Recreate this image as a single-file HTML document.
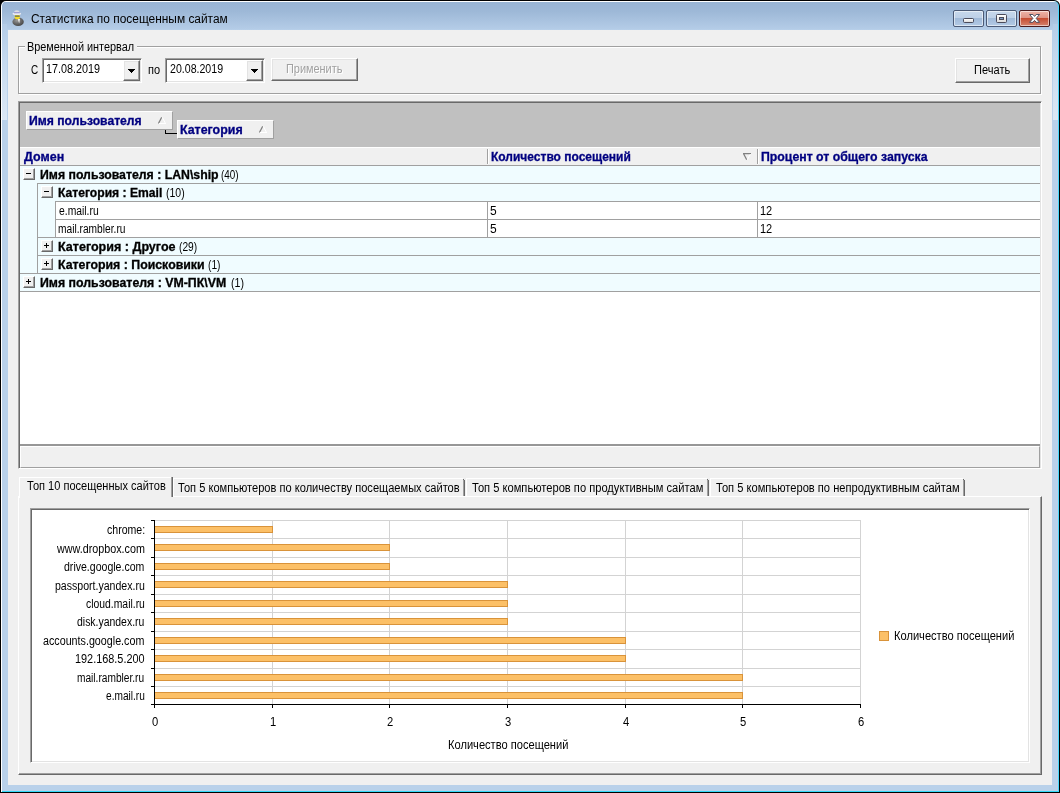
<!DOCTYPE html>
<html lang="ru"><head><meta charset="utf-8"><title>Статистика по посещенным сайтам</title>
<style>
html,body{margin:0;padding:0}
body{width:1060px;height:793px;position:relative;overflow:hidden;background:#fff;
 font-family:"Liberation Sans","DejaVu Sans",sans-serif;font-size:12px;color:#000}
div,span,svg{position:absolute;box-sizing:border-box}
.t{white-space:nowrap;line-height:1;transform-origin:0 0}
.t b{font-weight:bold}.t span{position:static}
#frame{left:0;top:0;width:1060px;height:793px;background:#000;border-radius:6px 6px 0 0}
#frame2{left:1px;top:1px;width:1058px;height:791px;border-radius:5px 5px 0 0;
 background:linear-gradient(#fff,#fff 1px,transparent 1px),linear-gradient(#98b4d4 0,#9db8d7 10px,#b4cce7 28px,#b9d1ea 29px,#b9d1ea 100%);
 box-shadow:inset 1px 0 0 #fff, inset -1px 0 0 #4ad8fc, inset 0 -1px 0 #35d8f8}
#txt{left:0;top:0;width:1060px;height:793px;will-change:transform}
#tlcorner{left:0;top:0;width:7px;height:7px;background:#000}
#sideL,#sideR{top:24px;width:5px;height:96px;background:linear-gradient(#b4cce7,#c6daef 40%,#dce8f5)}
#sideL{left:2px}#sideR{left:1053px}
#client{left:8px;top:30px;width:1044px;height:755px;background:#f0f0f0}
.sunk{border:1px solid;border-color:#a0a0a0 #fff #fff #a0a0a0;box-shadow:inset 1px 1px 0 #696969, inset -1px -1px 0 #e3e3e3}
.btn{background:#f0f0f0;border:1px solid;border-color:#fff #696969 #696969 #fff;box-shadow:inset -1px -1px 0 #a0a0a0, inset 1px 1px 0 #e3e3e3}
.cb{top:10px;height:17px;border:1px solid #4b5a76;border-radius:2px;box-shadow:inset 0 0 0 1px rgba(255,255,255,.55)}
.cbn{background:linear-gradient(#c7d8ec 0,#bdd0e7 7px,#9fb9d8 7px,#b3cae5 100%)}
.cbx{border-color:#4a1a1c;background:linear-gradient(#eeb4a8 0,#df9384 7px,#c4492e 7px,#d6836e 100%)}
.grp{border:1px solid #a0a0a0;box-shadow:1px 1px 0 #fff, inset 1px 1px 0 #fff}
.chip{background:#f0f0f0;border:1px solid;border-color:#fff #a0a0a0 #a0a0a0 #fff}
.row{left:20px;width:1020px;height:18px;background:#f0fcff;border-bottom:1px solid #a0a0a0}
.pm{width:12px;height:12px;background:#f0f0f0;border:1px solid;border-color:#fff #696969 #696969 #fff;box-shadow:inset -1px -1px 0 #a0a0a0}
.pm i{position:absolute;background:#000}
.vl{width:1px;background:#a0a0a0}
.hl{height:1px;background:#a0a0a0}
</style></head>
<body>
<div id="tlcorner"></div><div id="frame"></div><div id="frame2"></div>
<div id="sideL"></div><div id="sideR"></div>
<div id="client"></div>
<svg style="left:10px;top:8px" width="16" height="20" viewBox="0 0 16 20">
<defs><radialGradient id="gb" cx="0.4" cy="0.35" r="0.7"><stop offset="0" stop-color="#9a9a9a"/><stop offset="0.6" stop-color="#636363"/><stop offset="1" stop-color="#444"/></radialGradient></defs>
<ellipse cx="8.1" cy="13.7" rx="5.7" ry="4.3" fill="url(#gb)"/>
<path d="M7.6 10.6 L10 10.9 L9.2 15.6 Z" fill="#f2f2f2"/>
<ellipse cx="7.3" cy="8.9" rx="2.7" ry="2.3" fill="#f6dc2a"/>
<rect x="4.9" y="7.5" width="4.8" height="1.3" rx="0.4" fill="#5d6b5d"/>
<ellipse cx="6.8" cy="5.7" rx="4.3" ry="1.3" fill="#eeeef4"/>
<path d="M3.9 5.6 Q3.9 2.2 6.8 2.2 Q9.8 2.2 9.8 5.6 Z" fill="#dcdce4"/>
<rect x="3.9" y="4.2" width="5.9" height="1" fill="#8f8fd0"/>
</svg>
<div class="cb cbn" style="left:953px;width:31px"></div>
<div class="cb cbn" style="left:986px;width:31px"></div>
<div class="cb cbx" style="left:1019px;width:31px"></div>
<div style="left:963px;top:18px;width:11px;height:5px;background:linear-gradient(#fff,#dcdcdc);border:1px solid #4b4b5a;border-radius:1.5px"></div>
<div style="left:996px;top:14px;width:11px;height:9px;background:linear-gradient(#fff,#dcdcdc);border:1px solid #4b4b5a;border-radius:1.5px"></div>
<div style="left:999px;top:17px;width:5px;height:3px;background:#7b9cc6;border:1px solid #4b4b5a"></div>
<svg style="left:1027px;top:13px" width="15" height="11" viewBox="0 0 15 11">
<path d="M2.6 1.5 L5.9 1.5 L7.55 3.4 L9.2 1.5 L12.5 1.5 L9.2 5.4 L12.5 9.3 L9.2 9.3 L7.55 7.4 L5.9 9.3 L2.6 9.3 L5.9 5.4 Z" fill="#fff" stroke="#3b4359" stroke-width="0.9" stroke-linejoin="round"/>
</svg>
<div class="grp" style="left:18px;top:46px;width:1023px;height:48px"></div>
<div style="left:25px;top:40px;width:112px;height:14px;background:#f0f0f0"></div>
<div class="sunk" style="left:42px;top:58px;width:100px;height:25px;background:#fff"></div>
<div class="btn" style="left:123px;top:60px;width:17px;height:21px"></div>
<svg style="left:128px;top:69px" width="8" height="5" viewBox="0 0 8 5" shape-rendering="crispEdges"><path d="M0 0H7V1H6V2H5V3H4V4H3V3H2V2H1V1H0Z" fill="#000"/></svg>
<div class="sunk" style="left:165px;top:58px;width:100px;height:25px;background:#fff"></div>
<div class="btn" style="left:246px;top:60px;width:17px;height:21px"></div>
<svg style="left:251px;top:69px" width="8" height="5" viewBox="0 0 8 5" shape-rendering="crispEdges"><path d="M0 0H7V1H6V2H5V3H4V4H3V3H2V2H1V1H0Z" fill="#000"/></svg>
<div class="btn" style="left:271px;top:58px;width:87px;height:23px"></div>
<div class="btn" style="left:955px;top:58px;width:75px;height:25px"></div>
<div class="sunk" style="left:18px;top:101px;width:1024px;height:368px;background:#fff"></div>
<div style="left:20px;top:103px;width:1020px;height:44px;background:#c0c0c0"></div>
<div class="chip" style="left:26px;top:111px;width:147px;height:19px"></div>
<div class="chip" style="left:177px;top:120px;width:97px;height:19px"></div>
<div style="left:165px;top:130px;width:12px;height:4px;border-left:1px solid #000;border-bottom:1px solid #000"></div>
<svg style="left:158px;top:117px" width="8" height="7" viewBox="0 0 8 7"><path d="M0.5 6.5 L3.7 0.3" stroke="#808080" stroke-width="1.25" fill="none"/><path d="M4.3 0.3 L7.5 6.5 M1 6.5 H8" stroke="#fff" fill="none"/></svg>
<svg style="left:259px;top:126px" width="8" height="7" viewBox="0 0 8 7"><path d="M0.5 6.5 L3.7 0.3" stroke="#808080" stroke-width="1.25" fill="none"/><path d="M4.3 0.3 L7.5 6.5 M1 6.5 H8" stroke="#fff" fill="none"/></svg>
<div style="left:20px;top:147px;width:1020px;height:19px;background:#f0f0f0;border-top:1px solid #fff;border-bottom:1px solid #a0a0a0"></div>
<div style="left:487px;top:149px;width:2px;height:15px;border-left:1px solid #a0a0a0;border-right:1px solid #fff"></div>
<div style="left:757px;top:149px;width:2px;height:15px;border-left:1px solid #a0a0a0;border-right:1px solid #fff"></div>
<svg style="left:743px;top:153px" width="8" height="7" viewBox="0 0 8 7"><path d="M0 0.5 H8 M0.5 0.5 L3.7 6.7" stroke="#808080" stroke-width="1.25" fill="none"/><path d="M7.5 1 L4.3 6.7" stroke="#fff" fill="none"/></svg>
<div class="row" style="top:166px"></div>
<div class="row" style="top:184px"></div>
<div class="row" style="top:202px"></div>
<div class="row" style="top:220px"></div>
<div class="row" style="top:238px"></div>
<div class="row" style="top:256px"></div>
<div class="row" style="top:274px"></div>
<div style="left:56px;top:202px;width:984px;height:17px;background:#fff"></div>
<div class="vl" style="left:487px;top:202px;height:17px"></div>
<div class="vl" style="left:757px;top:202px;height:17px"></div>
<div style="left:56px;top:220px;width:984px;height:17px;background:#fff"></div>
<div class="vl" style="left:487px;top:220px;height:17px"></div>
<div class="vl" style="left:757px;top:220px;height:17px"></div>
<div class="vl" style="left:37px;top:183px;height:91px"></div>
<div class="vl" style="left:55px;top:201px;height:37px"></div>
<div style="left:20px;top:183px;width:17px;height:1px;background:#f0fcff"></div>
<div style="left:20px;top:201px;width:17px;height:1px;background:#f0fcff"></div>
<div style="left:20px;top:219px;width:17px;height:1px;background:#f0fcff"></div>
<div style="left:20px;top:237px;width:17px;height:1px;background:#f0fcff"></div>
<div style="left:20px;top:255px;width:17px;height:1px;background:#f0fcff"></div>
<div style="left:38px;top:201px;width:17px;height:1px;background:#f0fcff"></div>
<div style="left:38px;top:219px;width:17px;height:1px;background:#f0fcff"></div>
<div class="pm" style="left:23px;top:168px"><i style="left:2px;top:4px;width:5px;height:1px"></i></div>
<div class="pm" style="left:41px;top:186px"><i style="left:2px;top:4px;width:5px;height:1px"></i></div>
<div class="pm" style="left:41px;top:240px"><i style="left:2px;top:4px;width:5px;height:1px"></i><i style="left:4px;top:2px;width:1px;height:5px"></i></div>
<div class="pm" style="left:41px;top:258px"><i style="left:2px;top:4px;width:5px;height:1px"></i><i style="left:4px;top:2px;width:1px;height:5px"></i></div>
<div class="pm" style="left:23px;top:276px"><i style="left:2px;top:4px;width:5px;height:1px"></i><i style="left:4px;top:2px;width:1px;height:5px"></i></div>
<div style="left:20px;top:444px;width:1020px;height:2px;background:#979797"></div>
<div style="left:20px;top:446px;width:1020px;height:22px;background:#f0f0f0;border:1px solid;border-color:#fff #a0a0a0 #a0a0a0 #fff"></div>
<div style="left:18px;top:496px;width:1024px;height:279px;border:1px solid;border-color:#fff #696969 #696969 #fff;box-shadow:inset -1px -1px 0 #a0a0a0"></div>
<div style="left:19px;top:477px;width:154px;height:21px;background:#f0f0f0;border-top:1px solid #fff;border-left:1px solid #fff"></div>
<div style="left:171px;top:477px;width:2px;height:20px;border-left:1px solid #a0a0a0;border-right:1px solid #696969"></div>
<div style="left:173px;top:478px;width:791px;height:19px;border-top:1px solid #fff;border-left:1px solid #fff"></div>
<div style="left:463px;top:479px;width:4px;height:17px;border-left:1px solid #a0a0a0;background:linear-gradient(to right,#696969 1px,#f0f0f0 1px,#f0f0f0 2px,#fff 2px)"></div>
<div style="left:463px;top:478px;width:3px;height:1px;background:#f0f0f0"></div>
<div style="left:463px;top:479px;width:1px;height:1px;background:#696969"></div>
<div style="left:464px;top:479px;width:1px;height:1px;background:#f0f0f0"></div>
<div style="left:707px;top:479px;width:4px;height:17px;border-left:1px solid #a0a0a0;background:linear-gradient(to right,#696969 1px,#f0f0f0 1px,#f0f0f0 2px,#fff 2px)"></div>
<div style="left:707px;top:478px;width:3px;height:1px;background:#f0f0f0"></div>
<div style="left:707px;top:479px;width:1px;height:1px;background:#696969"></div>
<div style="left:708px;top:479px;width:1px;height:1px;background:#f0f0f0"></div>
<div style="left:963px;top:479px;width:4px;height:17px;border-left:1px solid #a0a0a0;background:linear-gradient(to right,#696969 1px,#f0f0f0 1px,#f0f0f0 2px,#fff 2px)"></div>
<div style="left:963px;top:478px;width:3px;height:1px;background:#f0f0f0"></div>
<div style="left:963px;top:479px;width:1px;height:1px;background:#696969"></div>
<div style="left:964px;top:479px;width:1px;height:1px;background:#f0f0f0"></div>
<div style="left:965px;top:478px;width:3px;height:18px;background:#f0f0f0"></div>
<div class="sunk" style="left:30px;top:508px;width:1000px;height:255px;background:#fff"></div>
<svg style="left:0;top:0" width="1060" height="793" viewBox="0 0 1060 793" shape-rendering="crispEdges"><path d="M154.5 520.5H860.0" stroke="#d3d3d3"/><path d="M154.5 538.5H860.0" stroke="#d3d3d3"/><path d="M154.5 557.5H860.0" stroke="#d3d3d3"/><path d="M154.5 575.5H860.0" stroke="#d3d3d3"/><path d="M154.5 594.5H860.0" stroke="#d3d3d3"/><path d="M154.5 612.5H860.0" stroke="#d3d3d3"/><path d="M154.5 631.5H860.0" stroke="#d3d3d3"/><path d="M154.5 649.5H860.0" stroke="#d3d3d3"/><path d="M154.5 668.5H860.0" stroke="#d3d3d3"/><path d="M154.5 686.5H860.0" stroke="#d3d3d3"/><path d="M272.5 520.0V704.5" stroke="#d3d3d3"/><path d="M389.5 520.0V704.5" stroke="#d3d3d3"/><path d="M507.5 520.0V704.5" stroke="#d3d3d3"/><path d="M625.5 520.0V704.5" stroke="#d3d3d3"/><path d="M742.5 520.0V704.5" stroke="#d3d3d3"/><path d="M860.5 520.0V704.5" stroke="#d3d3d3"/><rect x="154.5" y="526.5" width="118" height="6" fill="#fcc067" stroke="#d9933a"/><rect x="154.5" y="544.5" width="235" height="6" fill="#fcc067" stroke="#d9933a"/><rect x="154.5" y="563.5" width="235" height="6" fill="#fcc067" stroke="#d9933a"/><rect x="154.5" y="581.5" width="353" height="6" fill="#fcc067" stroke="#d9933a"/><rect x="154.5" y="600.5" width="353" height="6" fill="#fcc067" stroke="#d9933a"/><rect x="154.5" y="618.5" width="353" height="6" fill="#fcc067" stroke="#d9933a"/><rect x="154.5" y="637.5" width="471" height="6" fill="#fcc067" stroke="#d9933a"/><rect x="154.5" y="655.5" width="471" height="6" fill="#fcc067" stroke="#d9933a"/><rect x="154.5" y="674.5" width="588" height="6" fill="#fcc067" stroke="#d9933a"/><rect x="154.5" y="692.5" width="588" height="6" fill="#fcc067" stroke="#d9933a"/><path d="M154.5 520.0V705.0" stroke="#000"/><path d="M154.0 704.5H861.0" stroke="#000"/><path d="M151.0 520.5H154.5" stroke="#000"/><path d="M151.0 538.5H154.5" stroke="#000"/><path d="M151.0 557.5H154.5" stroke="#000"/><path d="M151.0 575.5H154.5" stroke="#000"/><path d="M151.0 594.5H154.5" stroke="#000"/><path d="M151.0 612.5H154.5" stroke="#000"/><path d="M151.0 631.5H154.5" stroke="#000"/><path d="M151.0 649.5H154.5" stroke="#000"/><path d="M151.0 668.5H154.5" stroke="#000"/><path d="M151.0 686.5H154.5" stroke="#000"/><path d="M151.0 704.5H154.5" stroke="#000"/><path d="M154.5 704.5V708.0" stroke="#000"/><path d="M272.5 704.5V708.0" stroke="#000"/><path d="M389.5 704.5V708.0" stroke="#000"/><path d="M507.5 704.5V708.0" stroke="#000"/><path d="M625.5 704.5V708.0" stroke="#000"/><path d="M742.5 704.5V708.0" stroke="#000"/><path d="M860.5 704.5V708.0" stroke="#000"/><rect x="879.5" y="631.5" width="9" height="9" fill="#fcc067" stroke="#d9933a"/></svg>
<div id="txt">
<div class="t" style="font-size:12px;color:#000;left:31.00px;top:12.84px;transform:scaleX(0.9924);">Статистика по посещенным сайтам</div>
<div class="t" style="font-size:12px;color:#000;left:27.09px;top:40.84px;transform:scaleX(0.9060);">Временной интервал</div>
<div class="t" style="font-size:12px;color:#000;left:30.70px;top:63.84px;transform:scaleX(0.8250);">С</div>
<div class="t" style="font-size:12px;color:#000;left:148.08px;top:63.84px;transform:scaleX(0.9167);">по</div>
<div class="t" style="font-size:12px;color:#000;left:46.10px;top:62.84px;transform:scaleX(0.8983);">17.08.2019</div>
<div class="t" style="font-size:12px;color:#000;left:170.00px;top:62.84px;transform:scaleX(0.8833);">20.08.2019</div>
<div class="t" style="font-size:12px;color:#a0a0a0;left:286.09px;top:62.84px;transform:scaleX(0.9098);text-shadow:1px 1px 0 #fff">Применить</div>
<div class="t" style="font-size:12px;color:#000;left:974.08px;top:63.84px;transform:scaleX(0.9211);">Печать</div>
<div class="t" style="font-size:12px;color:#000080;font-weight:bold;-webkit-text-stroke:0.3px;left:28.99px;top:114.84px;transform:scaleX(1.0136);">Имя пользователя</div>
<div class="t" style="font-size:12px;color:#000080;font-weight:bold;-webkit-text-stroke:0.3px;left:179.97px;top:123.84px;transform:scaleX(1.0339);">Категория</div>
<div class="t" style="font-size:12px;color:#000080;font-weight:bold;-webkit-text-stroke:0.3px;left:24.00px;top:150.84px;transform:scaleX(1.0395);">Домен</div>
<div class="t" style="font-size:12px;color:#000080;font-weight:bold;-webkit-text-stroke:0.3px;left:491.00px;top:150.84px;">Количество посещений</div>
<div class="t" style="font-size:12px;color:#000080;font-weight:bold;-webkit-text-stroke:0.3px;left:760.98px;top:150.84px;transform:scaleX(1.0247);">Процент от общего запуска</div>
<div class="t" style="font-size:12px;color:#000;font-weight:bold;-webkit-text-stroke:0.3px;left:39.98px;top:168.84px;transform:scaleX(1.0231);">Имя пользователя : LAN\ship</div>
<div class="t" style="font-size:12px;color:#000;left:221.18px;top:168.84px;transform:scaleX(0.8250);">(40)</div>
<div class="t" style="font-size:12px;color:#000;font-weight:bold;-webkit-text-stroke:0.3px;left:57.99px;top:186.84px;transform:scaleX(1.0098);">Категория : Email</div>
<div class="t" style="font-size:12px;color:#000;left:165.62px;top:186.84px;transform:scaleX(0.8750);">(10)</div>
<div class="t" style="font-size:12px;color:#000;left:58.70px;top:204.84px;transform:scaleX(0.8622);">e.mail.ru</div>
<div class="t" style="font-size:12px;color:#000;left:57.85px;top:222.84px;transform:scaleX(0.8500);">mail.rambler.ru</div>
<div class="t" style="font-size:12px;color:#000;left:490.00px;top:204.84px;">5</div>
<div class="t" style="font-size:12px;color:#000;left:490.00px;top:222.84px;">5</div>
<div class="t" style="font-size:12px;color:#000;left:760.08px;top:204.84px;transform:scaleX(0.9167);">12</div>
<div class="t" style="font-size:12px;color:#000;left:760.08px;top:222.84px;transform:scaleX(0.9167);">12</div>
<div class="t" style="font-size:12px;color:#000;font-weight:bold;-webkit-text-stroke:0.3px;left:57.95px;top:240.84px;transform:scaleX(1.0450);">Категория : Другое</div>
<div class="t" style="font-size:12px;color:#000;left:179.15px;top:240.84px;transform:scaleX(0.8500);">(29)</div>
<div class="t" style="font-size:12px;color:#000;font-weight:bold;-webkit-text-stroke:0.3px;left:57.97px;top:258.84px;transform:scaleX(1.0284);">Категория : Поисковики</div>
<div class="t" style="font-size:12px;color:#000;left:208.15px;top:258.84px;transform:scaleX(0.8462);">(1)</div>
<div class="t" style="font-size:12px;color:#000;font-weight:bold;-webkit-text-stroke:0.3px;left:39.97px;top:276.84px;transform:scaleX(1.0278);">Имя пользователя : VM-ПК\VM</div>
<div class="t" style="font-size:12px;color:#000;left:230.82px;top:276.84px;transform:scaleX(0.8846);">(1)</div>
<div class="t" style="font-size:12px;color:#000;left:27.00px;top:479.84px;transform:scaleX(0.9200);">Топ 10 посещенных сайтов</div>
<div class="t" style="font-size:12px;color:#000;left:178.00px;top:481.84px;transform:scaleX(0.9243);">Топ 5 компьютеров по количеству посещаемых сайтов</div>
<div class="t" style="font-size:12px;color:#000;left:472.00px;top:481.84px;transform:scaleX(0.9277);">Топ 5 компьютеров по продуктивным сайтам</div>
<div class="t" style="font-size:12px;color:#000;left:716.00px;top:481.84px;transform:scaleX(0.9275);">Топ 5 компьютеров по непродуктивным сайтам</div>
<div class="t" style="font-size:12px;color:#000;left:107.00px;top:523.84px;transform:scaleX(0.8810);">chrome:</div>
<div class="t" style="font-size:12px;color:#000;left:57.00px;top:542.84px;transform:scaleX(0.8969);">www.dropbox.com</div>
<div class="t" style="font-size:12px;color:#000;left:64.00px;top:560.84px;transform:scaleX(0.8791);">drive.google.com</div>
<div class="t" style="font-size:12px;color:#000;left:55.12px;top:579.84px;transform:scaleX(0.8800);">passport.yandex.ru</div>
<div class="t" style="font-size:12px;color:#000;left:86.00px;top:597.84px;transform:scaleX(0.8657);">cloud.mail.ru</div>
<div class="t" style="font-size:12px;color:#000;left:77.00px;top:615.84px;transform:scaleX(0.8701);">disk.yandex.ru</div>
<div class="t" style="font-size:12px;color:#000;left:43.00px;top:634.84px;transform:scaleX(0.8938);">accounts.google.com</div>
<div class="t" style="font-size:12px;color:#000;left:75.09px;top:652.84px;transform:scaleX(0.9067);">192.168.5.200</div>
<div class="t" style="font-size:12px;color:#000;left:77.15px;top:671.84px;transform:scaleX(0.8462);">mail.rambler.ru</div>
<div class="t" style="font-size:12px;color:#000;left:106.00px;top:689.84px;transform:scaleX(0.8444);">e.mail.ru</div>
<div class="t" style="font-size:12px;color:#000;left:151.80px;top:715.84px;transform:scaleX(0.9333);">0</div>
<div class="t" style="font-size:12px;color:#000;left:269.80px;top:715.84px;transform:scaleX(0.9333);">1</div>
<div class="t" style="font-size:12px;color:#000;left:386.80px;top:715.84px;transform:scaleX(0.9333);">2</div>
<div class="t" style="font-size:12px;color:#000;left:504.80px;top:715.84px;transform:scaleX(0.9333);">3</div>
<div class="t" style="font-size:12px;color:#000;left:622.80px;top:715.84px;transform:scaleX(0.9333);">4</div>
<div class="t" style="font-size:12px;color:#000;left:739.80px;top:715.84px;transform:scaleX(0.9333);">5</div>
<div class="t" style="font-size:12px;color:#000;left:857.80px;top:715.84px;transform:scaleX(0.9333);">6</div>
<div class="t" style="font-size:12px;color:#000;left:448.07px;top:738.84px;transform:scaleX(0.9258);">Количество посещений</div>
<div class="t" style="font-size:12px;color:#000;left:893.57px;top:629.84px;transform:scaleX(0.9258);">Количество посещений</div>
</div>
</body></html>
